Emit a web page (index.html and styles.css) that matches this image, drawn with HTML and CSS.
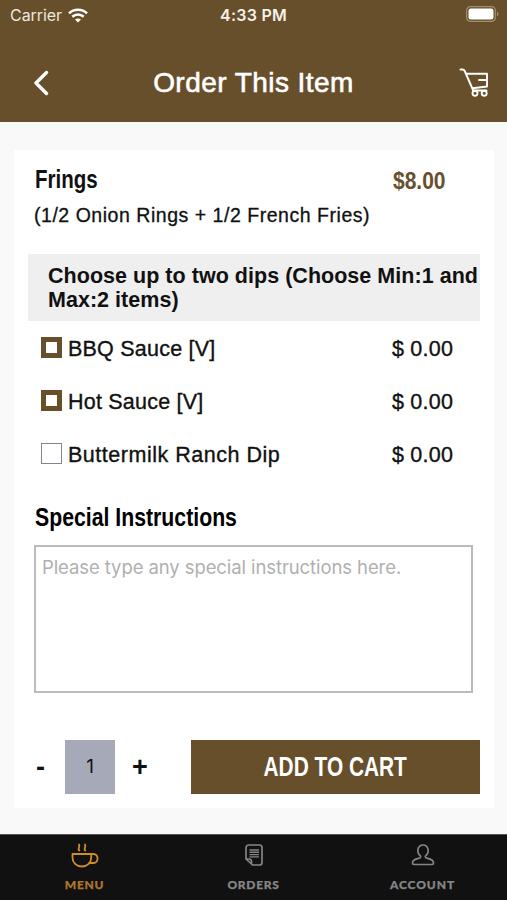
FILE: index.html
```html
<!DOCTYPE html>
<html lang="en">
<head>
<meta charset="utf-8">
<title>Order This Item</title>
<link rel="stylesheet" href="styles.css">
</head>
<body>
<header class="header">
  <div class="status">
    <div class="carrier"><span>Carrier</span>
      <svg class="wifi" width="20" height="15" viewBox="0 0 20 15" fill="none" stroke="#fff" stroke-width="2.6"><path d="M1 5.4C6 .5 14 .5 19 5.4M4.3 8.8c3.200-3 8.200-3 11.400 0"/><path d="M10 14.600l-3-3c1.700-1.500 4.300-1.500 6 0z" fill="#fff" stroke="none"/></svg>
    </div>
    <span class="time">4:33 PM</span>
    <svg class="battery" width="33" height="16" viewBox="0 0 33 16"><rect x=".6" y=".6" width="28.800" height="14.800" rx="4" fill="none" stroke="#a08d72" stroke-width="1.200"/><rect x="2.500" y="2.500" width="25" height="11" rx="2.300" fill="#fff"/><path d="M31 5.500q1.500.7 1.500 2.500T31 10.500z" fill="#a08d72"/></svg>
  </div>
  <div class="titlebar">
    <svg class="back" width="15" height="26" viewBox="0 0 15 26" fill="none" stroke="#fff" stroke-width="3.400" stroke-linecap="round" stroke-linejoin="round"><path d="M12.500 2.500L2 13l10.500 10.500"/></svg>
    <h1>Order This Item</h1>
    <svg class="cart" width="30" height="30" viewBox="0 0 30 30" fill="none" stroke="#fff" stroke-width="1.900" stroke-linecap="round" stroke-linejoin="round"><path d="M1.500 1.500h2q1.500 0 2.200 1.500L14 22M7.500 5.700H28v12.800l-14.500 1.700M27.500 12H20M14 22.500h13.500"/><circle cx="16" cy="25.200" r="2.500"/><circle cx="25.200" cy="25.200" r="2.500"/></svg>
  </div>
</header>
<main>
  <section class="card">
    <div class="item"><h2><span class="name">Frings</span></h2><span class="price">$8.00</span></div>
    <p class="description">(1/2 Onion Rings + 1/2 French Fries)</p>
    <h3 class="group">Choose up to two dips (Choose Min:1 and<br>Max:2 items)</h3>
    <div class="options">
      <div class="option"><i class="box checked"></i><span>BBQ Sauce [V]</span><b>$ 0.00</b></div>
      <div class="option"><i class="box checked"></i><span>Hot Sauce [V]</span><b>$ 0.00</b></div>
      <div class="option"><i class="box"></i><span class="wide">Buttermilk Ranch Dip</span><b>$ 0.00</b></div>
    </div>
    <h2 class="instructions"><span class="heading">Special Instructions</span></h2>
    <div class="field">Please type any special instructions here.</div>
    <div class="actions"><span class="minus">-</span><span class="quantity">1</span><span class="plus">+</span><div class="add"><span>ADD TO CART</span></div></div>
  </section>
</main>
<nav>
  <div class="tab active">
    <svg width="28" height="26" viewBox="0 0 28 26" fill="none" stroke="currentColor" stroke-width="1.800" stroke-linecap="round" stroke-linejoin="round"><path d="M1.500 11h18.700v3.500c0 5-3.700 9-9.300 9s-9.400-4-9.400-9zM20.200 11h2.300c5.400 0 5.400 9 0 9H18M8.300 7.500c-2.300-2 1.200-3.500-.3-6M14.300 7.500c-2.300-2 1.200-3.500-.3-6"/></svg><span>MENU</span>
  </div>
  <div class="tab">
    <svg width="28" height="26" viewBox="0 0 28 26" fill="none" stroke="currentColor" stroke-width="1.700" stroke-linecap="round" stroke-linejoin="round"><path d="M9 2h10.500Q22 2 22 4.500v15q0 2.500-2.500 2.500h-7L6 16V5q0-3 3-3zM6 16h3q2.500 0 2.500 2.500V21"/><path stroke-width="1.400" d="M10 7h8.500M10 9.300h8.500M10 11.600h8.500M10 13.900h8.500"/></svg><span>ORDERS</span>
  </div>
  <div class="tab">
    <svg width="28" height="26" viewBox="0 0 28 26" fill="none" stroke="currentColor" stroke-width="1.700" stroke-linecap="round" stroke-linejoin="round"><path d="M11.500 13C7 9.500 8.500 2 14 2s7 7.500 2.500 11c-.6 1.300.2 2 2 2.400 4.300.9 6 2.600 6 4.600q0 1.500-1.500 1.500H5q-1.500 0-1.500-1.500c0-2 1.700-3.700 6-4.600 1.800-.4 2.600-1.100 2-2.400z"/></svg><span class="account">ACCOUNT</span>
  </div>
</nav>
</body>
</html>
```
FILE: styles.css
```css
* { box-sizing: border-box; }
body { margin: 0; width: 507px; height: 900px; display: flex; flex-direction: column; background: #f9f9f9; color: #111; font-family: "Liberation Sans", Arial, sans-serif; overflow: hidden; }
h1, h2, h3, p { margin: 0; }
span, b { white-space: nowrap; }
.header { height: 122px; background: #674f2b; color: #fff; flex: none; }
.status { height: 30px; display: grid; grid-template-columns: 1fr auto 1fr; padding: 0 8px 0 10px; align-items: center; font: 16px/20px Inter, sans-serif; }
.carrier { display: flex; align-items: center; gap: 6px; color: #eee7dc; letter-spacing: -.05px; }
.time { font-weight: 600; letter-spacing: .25px; color: #f6f1e9; margin-left: -2px; }
.battery { justify-self: end; margin-top: -2px; }
.titlebar { height: 92px; display: grid; grid-template-columns: 1fr auto 1fr; align-items: center; padding: 13px 18px 0 34px; }
.titlebar h1 { font-weight: 400; font-size: 28px; line-height: 34px; letter-spacing: .45px; -webkit-text-stroke: .6px; margin-left: -16px; }
.cart { justify-self: end; }
main { height: 712px; padding: 28px 13px 0 14px; flex: none; }
.card { height: 658px; background: #fff; padding: 14px 14px 0; }
.item { display: flex; height: 32px; padding-left: 7px; }
h2, .price, .add { font-weight: 700; }
h2 { font-size: 25px; line-height: 30px; height: 32px; width: 358px; flex: none; }
h2 span, .price { display: inline-block; transform-origin: left center; }
.name { transform: scaleX(.82); }
.heading { transform: scaleX(.85); color: #000; }
.price { font-size: 24px; line-height: 33px; color: #674f2b; transform: scaleX(.875); }
.description { font-size: 19.500px; line-height: 24px; padding: 7px 0 0 6px; letter-spacing: .53px; -webkit-text-stroke: .3px; white-space: nowrap; }
.group { margin-top: 27px; height: 67px; padding: 10px 0 0 20px; background: #efefef; font-size: 21.500px; letter-spacing: .03px; line-height: 24px; white-space: nowrap; }
.options { padding-left: 13px; }
.option { display: grid; grid-template-columns: 27px 324px auto; align-items: center; height: 53px; font-size: 21.500px; -webkit-text-stroke: .35px; }
.option span, .option b { padding-top: 3px; font-weight: 400; letter-spacing: .22px; }
.option .wide { letter-spacing: .52px; }
.box { width: 21px; height: 21px; border: 1px solid #858294; }
.box.checked { border: 5px solid #674f2b; }
.instructions { margin: 22px 0 11px 7px; }
.field { width: 439px; height: 148px; margin-left: 6px; padding: 8px 6px; border: 2px solid #bbb; color: #b0b0b0; font: 18.500px/24px Inter, sans-serif; letter-spacing: -.09px; white-space: nowrap; }
.actions { display: flex; align-items: center; height: 54px; margin-top: 47px; }
.minus, .plus { width: 37px; padding-left: 7px; font: 700 27px/54px "Liberation Sans", sans-serif; }
.minus { transform: translateX(1px); }
.plus { width: 76px; padding-left: 17px; }
.quantity { width: 50px; height: 54px; background: #a6aab8; text-align: center; font: 19px/53px Inter, sans-serif; }
.add { width: 289px; height: 54px; background: #674f2b; color: #fff; text-align: center; font-size: 28px; line-height: 54px; }
.add span { display: inline-block; transform: scaleX(.745); margin: 0 -24px; }
nav { height: 66px; display: grid; grid-template-columns: repeat(3, 1fr); background: #111; border-top: 1px solid #555; flex: none; }
.tab { display: flex; flex-direction: column; align-items: center; color: #858585; padding-top: 8px; gap: 6px; font: 900 12px/20px Lato, sans-serif; letter-spacing: .7px; -webkit-text-stroke: .25px; }
.tab svg { -webkit-text-stroke: 0; }
.account { letter-spacing: .9px; }
.active { color: #cf8d2d; }
.active span { color: #ad762b; }
```
